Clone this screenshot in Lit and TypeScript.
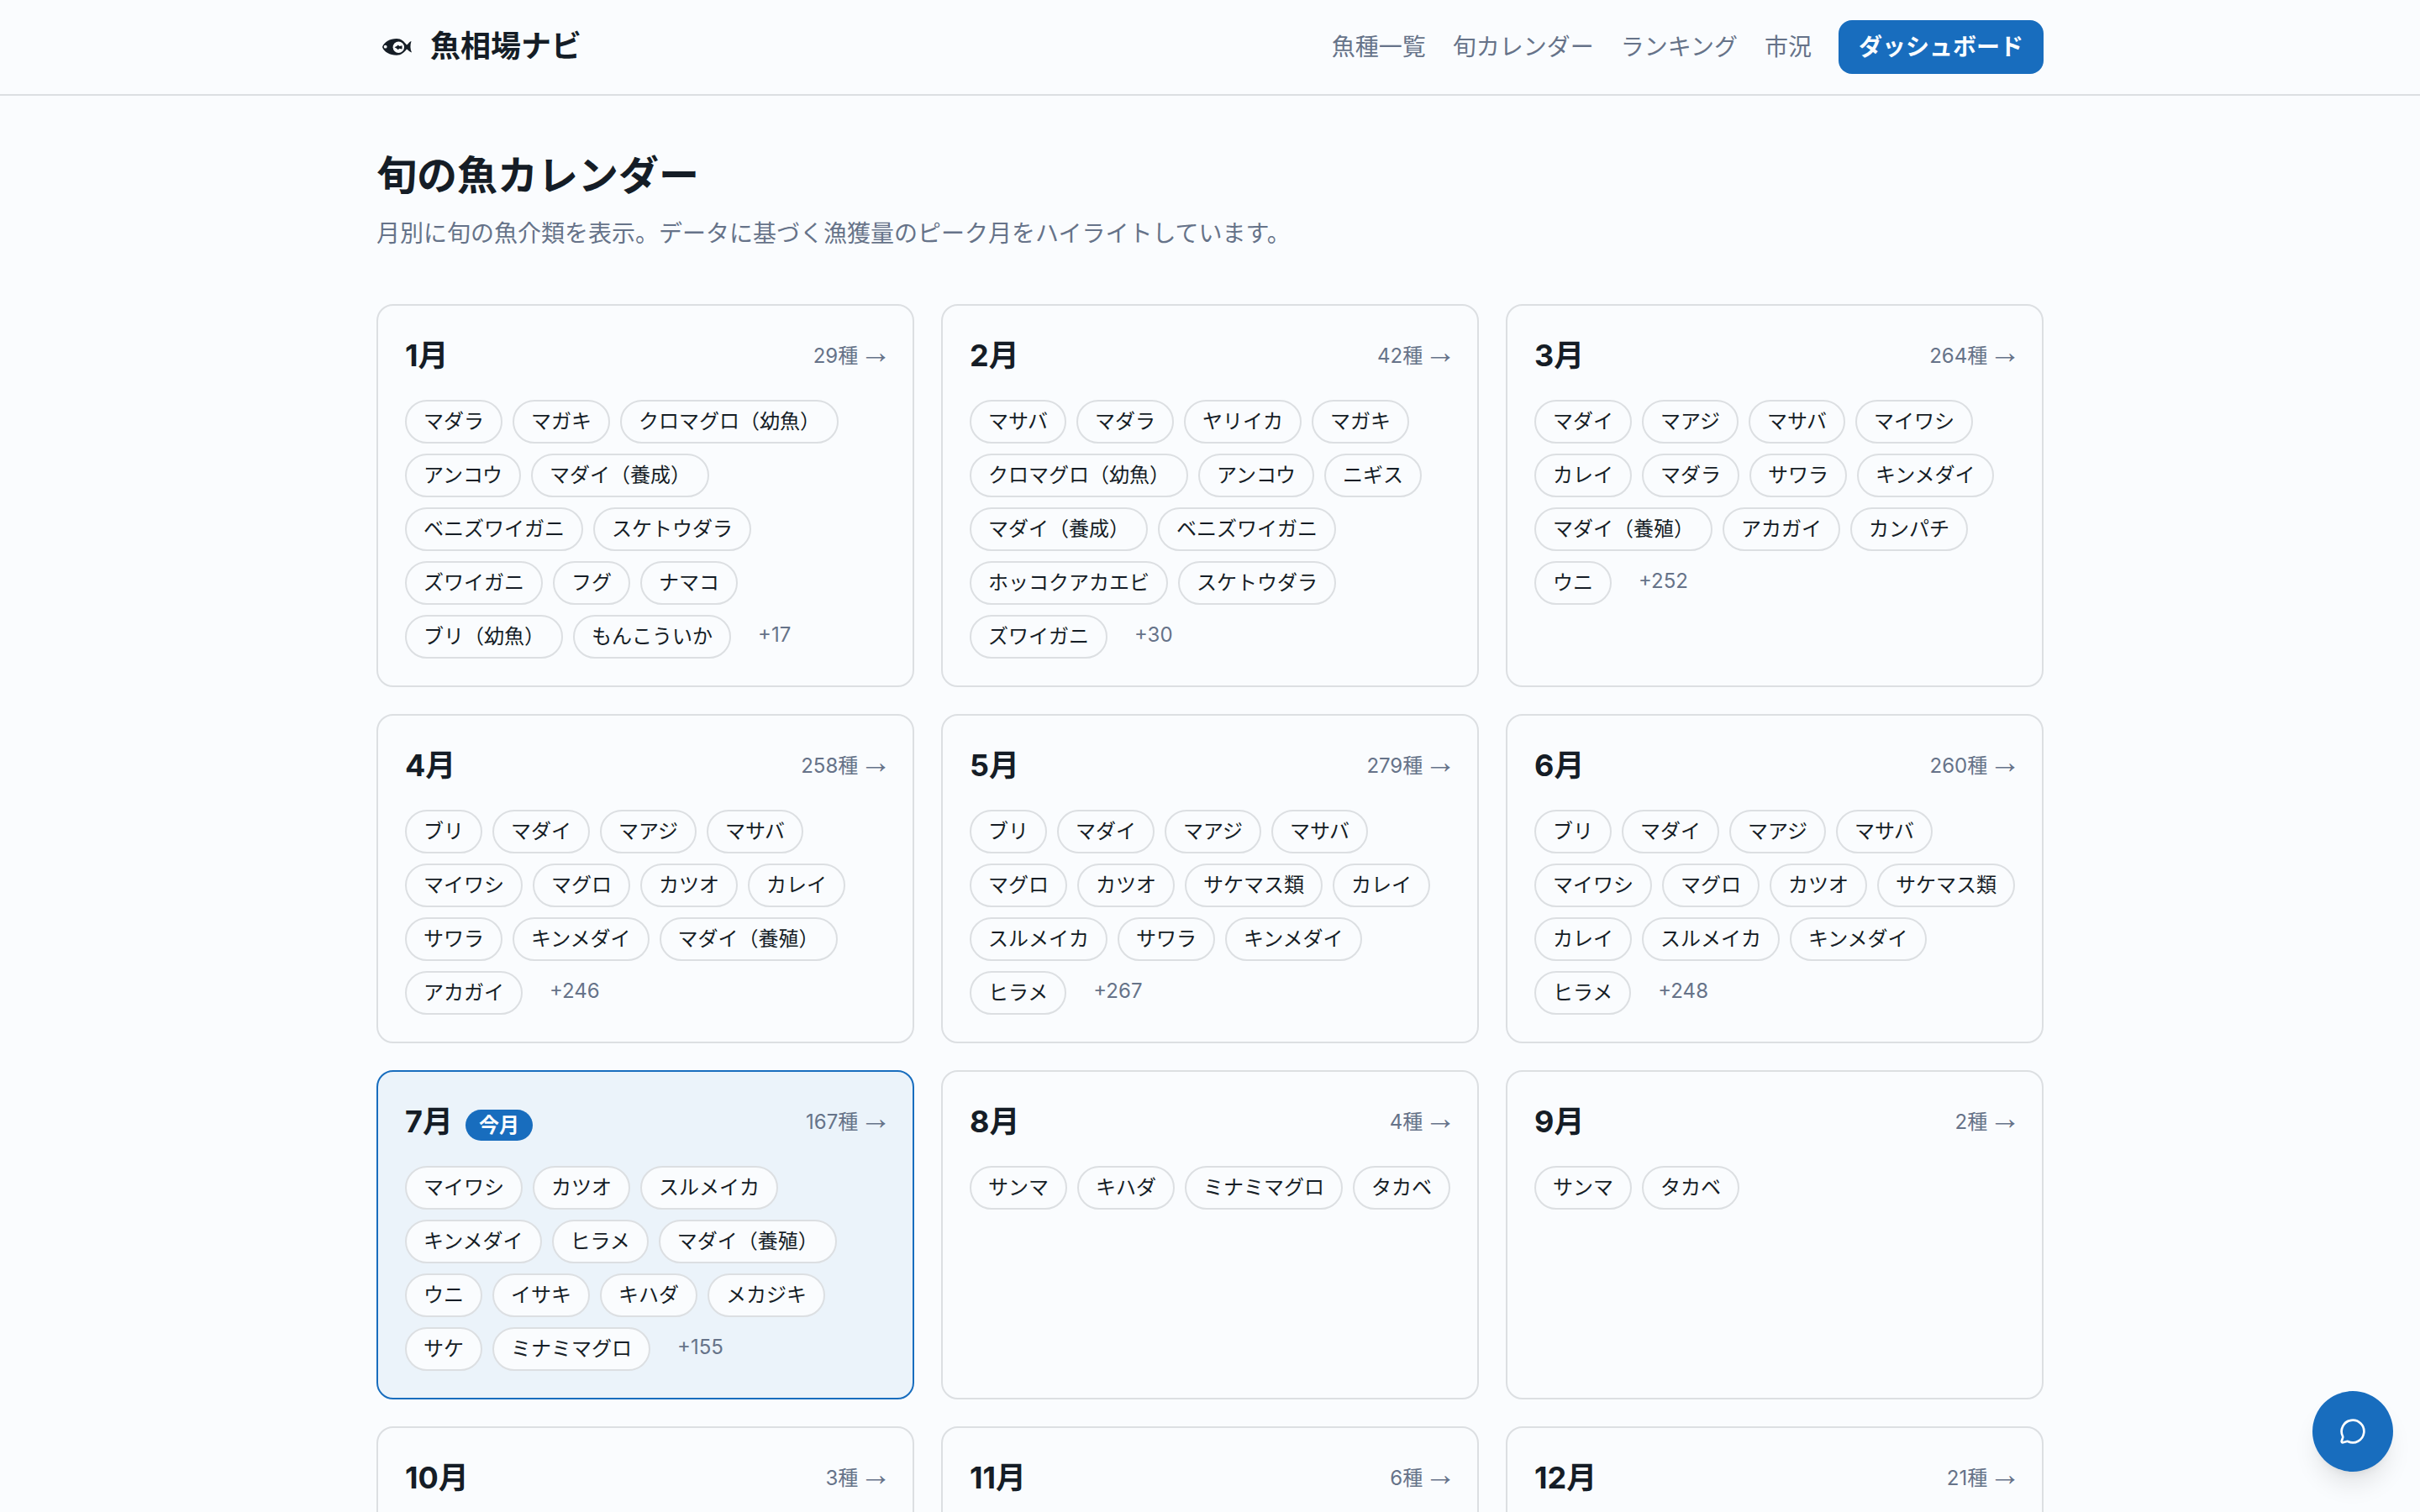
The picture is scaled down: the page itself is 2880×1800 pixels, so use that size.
import { LitElement, html, css, nothing } from "lit";
import { customElement, property } from "lit/decorators.js";
import { classMap } from "lit/directives/class-map.js";

interface Month {
  month: number;
  total: number;
  fish: string[];
  current?: boolean;
}

const MONTHS: Month[] = [
  { month: 1, total: 29, fish: ["マダラ", "マガキ", "クロマグロ（幼魚）", "アンコウ", "マダイ（養成）", "ベニズワイガニ", "スケトウダラ", "ズワイガニ", "フグ", "ナマコ", "ブリ（幼魚）", "もんこういか"] },
  { month: 2, total: 42, fish: ["マサバ", "マダラ", "ヤリイカ", "マガキ", "クロマグロ（幼魚）", "アンコウ", "ニギス", "マダイ（養成）", "ベニズワイガニ", "ホッコクアカエビ", "スケトウダラ", "ズワイガニ"] },
  { month: 3, total: 264, fish: ["マダイ", "マアジ", "マサバ", "マイワシ", "カレイ", "マダラ", "サワラ", "キンメダイ", "マダイ（養殖）", "アカガイ", "カンパチ", "ウニ"] },
  { month: 4, total: 258, fish: ["ブリ", "マダイ", "マアジ", "マサバ", "マイワシ", "マグロ", "カツオ", "カレイ", "サワラ", "キンメダイ", "マダイ（養殖）", "アカガイ"] },
  { month: 5, total: 279, fish: ["ブリ", "マダイ", "マアジ", "マサバ", "マグロ", "カツオ", "サケマス類", "カレイ", "スルメイカ", "サワラ", "キンメダイ", "ヒラメ"] },
  { month: 6, total: 260, fish: ["ブリ", "マダイ", "マアジ", "マサバ", "マイワシ", "マグロ", "カツオ", "サケマス類", "カレイ", "スルメイカ", "キンメダイ", "ヒラメ"] },
  { month: 7, total: 167, current: true, fish: ["マイワシ", "カツオ", "スルメイカ", "キンメダイ", "ヒラメ", "マダイ（養殖）", "ウニ", "イサキ", "キハダ", "メカジキ", "サケ", "ミナミマグロ"] },
  { month: 8, total: 4, fish: ["サンマ", "キハダ", "ミナミマグロ", "タカベ"] },
  { month: 9, total: 2, fish: ["サンマ", "タカベ"] },
  { month: 10, total: 3, fish: [] },
  { month: 11, total: 6, fish: [] },
  { month: 12, total: 21, fish: [] },
];

const NAV = ["魚種一覧", "旬カレンダー", "ランキング", "市況"];

@customElement("month-card")
class MonthCard extends LitElement {
  @property({ attribute: false }) data!: Month;

  static styles = css`
    :host { display: block; min-width: 0; }
    .card {
      box-sizing: border-box;
      height: 100%;
      min-height: 200px;
      padding: 32px;
      border: 2px solid #dcdfe2;
      border-radius: 20px;
      background: #fafcfe;
    }
    .card.current { border-color: #186dbe; background: #ebf3fa; }
    .head {
      display: flex;
      align-items: center;
      justify-content: space-between;
      margin-bottom: 24px;
    }
    h2 { margin: 0; padding-bottom: 2px; font-size: 36px; line-height: 54px; font-weight: 700; }
    .now {
      margin-left: 15px;
      padding: 4px 16px;
      border-radius: 999px;
      background: #186dbe;
      color: #fafcfe;
      font-size: 24px;
      line-height: 32px;
    }
    .total {
      color: #667389;
      font-size: 24px;
      line-height: 32px;
      white-space: nowrap;
      word-spacing: -5px;
    }
    .arrow {
      margin-right: -7px;
      font-family: "Liberation Sans", sans-serif;
      font-size: 38px;
      line-height: 0;
    }
    .chips { display: flex; flex-wrap: wrap; gap: 12px; }
    .chip {
      padding: 8px 20px;
      border: 2px solid #dcdfe2;
      border-radius: 999px;
      background: #fafcfe;
      font-size: 24px;
      line-height: 32px;
    }
    .more { padding: 8px 20px; color: #667389; font-size: 24px; line-height: 32px; }
  `;

  render() {
    const { month, total, fish, current } = this.data;
    const rest = total - fish.length;
    return html`
      <section class=${classMap({ card: true, current: !!current })}>
        <div class="head">
          <h2>${month}月${current ? html`<span class="now">今月</span>` : nothing}</h2>
          <span class="total">${total}種 <span class="arrow">→</span></span>
        </div>
        <div class="chips">
          ${fish.map((name) => html`<span class="chip">${name}</span>`)}
          ${fish.length && rest > 0 ? html`<span class="more">+${rest}</span>` : nothing}
        </div>
      </section>
    `;
  }
}

@customElement("app-root")
class AppRoot extends LitElement {
  static styles = css`
    :host {
      display: block;
      height: 1800px;
      overflow: hidden;
      background: #fafcfe;
      color: #151d26;
      font-family: Inter, "Noto Sans CJK JP", sans-serif;
    }
    .bar { border-bottom: 2px solid #dcdfe2; }
    .wrap { box-sizing: border-box; width: 2048px; margin: 0 auto; padding: 0 32px; }
    .bar .wrap { display: flex; align-items: center; justify-content: space-between; height: 112px; }
    .brand { display: flex; align-items: center; gap: 16px; }
    .name { padding-bottom: 2px; font-size: 36px; line-height: 54px; font-weight: 700; }
    .fish { display: block; width: 48px; height: 40px; }
    nav { display: flex; align-items: center; gap: 32px; font-size: 28px; line-height: 40px; color: #667389; }
    .cta {
      padding: 12px 24px;
      border-radius: 16px;
      background: #186dbe;
      color: #fafcfe;
      font-weight: 600;
    }
    main.wrap { padding-top: 64px; }
    h1 { margin: 0; padding-bottom: 2px; font-size: 48px; line-height: 62px; font-weight: 700; }
    .lead { margin: 16px 0 64px; font-size: 28px; line-height: 40px; color: #667389; }
    .grid { display: grid; grid-template-columns: repeat(3, minmax(0, 1fr)); gap: 32px; }
    .chat {
      position: absolute;
      left: 2752px;
      top: 1656px;
      display: flex;
      align-items: center;
      justify-content: center;
      width: 96px;
      height: 96px;
      border-radius: 50%;
      background: #186dbe;
      color: #fff;
      box-shadow: 0 20px 30px -6px rgb(0 0 0 / 0.1), 0 8px 12px -8px rgb(0 0 0 / 0.1);
    }
    .chat svg { width: 32px; height: 32px; }
  `;

  render() {
    return html`
      <header class="bar">
        <div class="wrap">
          <div class="brand">
            <svg class="fish" viewBox="0 0 48 40">
              <path fill="#151d26" d="M7 20C9 14 16 10 24 10C29.500 10 33 13.500 36 17.500C38 16.500 39 13.500 41.500 13C40 17.500 40 22.500 42 26.500C39.500 26 38 23.500 36 22.500C33 26.500 29.500 29.700 24 29.700C16 29.700 9 26 7 20Z" />
              <circle cx="10.700" cy="19.700" r="1.900" fill="#fafcfe" />
              <circle cx="26.300" cy="20.300" r="6.700" fill="#fafcfe" />
              <path fill="#151d26" d="M21.500 20.300L24.500 18.800L25.500 17.600L27.500 18.900L30.500 18.200V22.400L27.500 21.700L25.500 23.200L24.500 21.900Z" />
            </svg>
            <span class="name">魚相場ナビ</span>
          </div>
          <nav>
            ${NAV.map((label) => html`<span>${label}</span>`)}
            <span class="cta">ダッシュボード</span>
          </nav>
        </div>
      </header>
      <main class="wrap">
        <h1>旬の魚カレンダー</h1>
        <p class="lead">月別に旬の魚介類を表示。データに基づく漁獲量のピーク月をハイライトしています。</p>
        <div class="grid">${MONTHS.map((m) => html`<month-card .data=${m}></month-card>`)}</div>
      </main>
      <div class="chat">
        <svg viewBox="0 0 24 24" fill="none" stroke="currentColor" stroke-width="2" stroke-linecap="round" stroke-linejoin="round">
          <path d="M2.992 16.342a2 2 0 0 1 .094 1.167l-1.065 3.290a1 1 0 0 0 1.236 1.168l3.413-.998a2 2 0 0 1 1.099.092 10 10 0 1 0-4.777-4.719" />
        </svg>
      </div>
    `;
  }
}
